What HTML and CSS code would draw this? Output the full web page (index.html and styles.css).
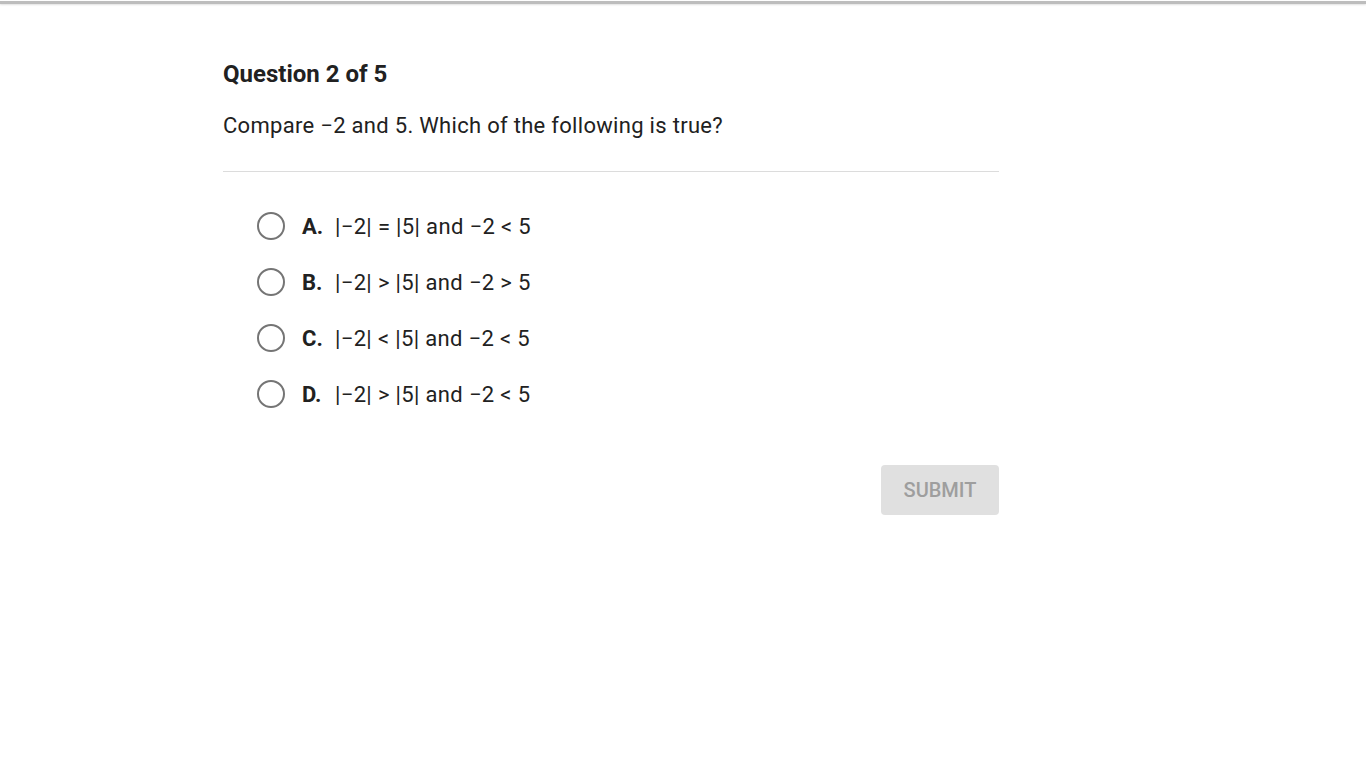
FILE: index.html
```html
<!DOCTYPE html>
<html>
<head>
<meta charset="utf-8">
<link rel="stylesheet" href="styles.css">
</head>
<body>
<div class="topbar"></div>
<main class="quiz">
  <h1 class="title">Question 2 of 5</h1>
  <p class="prompt">Compare −2 and 5. Which of the following is true?</p>
  <hr class="divider">
  <ul class="options">
    <li class="option"><span class="radio"></span><span class="letter">A.</span><span class="text">|−2| = |5| and −2 &lt; 5</span></li>
    <li class="option"><span class="radio"></span><span class="letter">B.</span><span class="text">|−2| &gt; |5| and −2 &gt; 5</span></li>
    <li class="option"><span class="radio"></span><span class="letter">C.</span><span class="text">|−2| &lt; |5| and −2 &lt; 5</span></li>
    <li class="option"><span class="radio"></span><span class="letter">D.</span><span class="text">|−2| &gt; |5| and −2 &lt; 5</span></li>
  </ul>
  <div class="actions"><button class="submit">SUBMIT</button></div>
</main>
</body>
</html>
```
FILE: styles.css
```css
html, body { margin: 0; padding: 0; background: #fff; }
body { font-family: Roboto, "Liberation Sans", sans-serif; color: #212121; }
.topbar { height: 3px; margin-top: 1px; background: #bdbdbd; box-shadow: 0 1px 2px rgba(0,0,0,0.12); }
.quiz { width: 776px; margin: 0 0 0 223px; padding-top: 56px; }
.title { margin: 0; font-size: 24px; font-weight: 700; line-height: 28px; }
.prompt { margin: 24px 0 0; font-size: 22px; line-height: 28px; letter-spacing: 0.3px; }
.divider { margin: 31px 0 0; border: 0; border-top: 1px solid #dcdcdc; height: 0; }
.options { list-style: none; margin: 0; padding: 40px 0 0 34px; display: flex; flex-direction: column; gap: 28px; }
.option { display: flex; align-items: center; height: 28px; font-size: 22px; letter-spacing: 0.35px; }
.radio { width: 24px; height: 24px; border: 2px solid #757575; border-radius: 50%; flex: none; }
.letter { font-weight: 700; margin-left: 17px; width: 33px; letter-spacing: 0; }
.actions { display: flex; justify-content: flex-end; margin-top: 57px; }
.submit { width: 118px; height: 50px; border: 0; border-radius: 4px; background: #e0e0e0; color: #9e9e9e; font-family: Roboto, "Liberation Sans", sans-serif; font-size: 20px; font-weight: 500; padding: 0; }
```
